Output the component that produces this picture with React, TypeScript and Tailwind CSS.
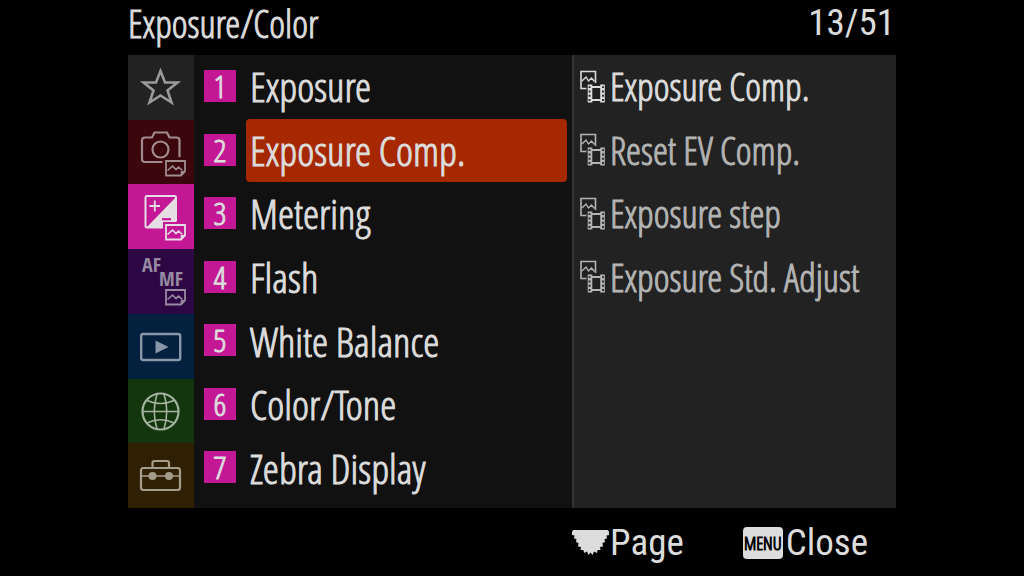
import { useState } from "react";
import type { ReactNode } from "react";

function PhotoOutline({ x, y }: { x: number; y: number }) {
  return (
    <g transform={`translate(${x} ${y})`} fill="none" stroke="currentColor">
      <path d="M1 1H20V11.5L16 15.500H1Z" strokeWidth="1.8" />
      <path d="M20 11.500H16V15.500Z" fill="currentColor" strokeWidth="0.8" />
      <path d="M2.500 10.500L7.500 6L11 9.500L13.500 7L17.500 10.500" strokeWidth="1.6" />
    </g>
  );
}

function StarIcon() {
  return (
    <svg viewBox="0 0 65 64" className="h-16 w-[65px]" fill="none" stroke="currentColor" strokeWidth="2.6" aria-hidden="true">
      <path d="M32.500 16L37 27.500H49.500L39.500 35.500L43.500 47.500L32.500 40.500L21.500 47.500L25.500 35.500L15.500 27.500H28Z" />
    </svg>
  );
}

function CameraIcon() {
  return (
    <svg viewBox="0 0 65 64" className="h-16 w-[65px]" fill="none" stroke="currentColor" strokeWidth="2.2" aria-hidden="true">
      <path d="M34.500 42H17Q14 42 14 39V20.500Q14 17.500 17 17.500H24L26.500 12.500H39L41.500 17.500H48.500Q51.500 17.500 51.500 20.500V37" />
      <circle cx="32.500" cy="29.500" r="8" />
      <PhotoOutline x={37} y={40} />
    </svg>
  );
}

function ExposureIcon() {
  return (
    <svg viewBox="0 0 65 64" className="h-16 w-[65px]" fill="none" stroke="currentColor" strokeWidth="2" aria-hidden="true">
      <path d="M35 42.500H19Q17.500 42.500 17.500 41V12.500Q17.500 11 19 11H46.500Q48 11 48 12.500V36.500" />
      <path d="M48 12V37H35V43H18Z" fill="currentColor" stroke="none" />
      <path d="M21.500 21H32M26.800 15.500V26.500" strokeWidth="1.8" />
      <path d="M34 34.200H43" stroke="#c41796" strokeWidth="2.2" />
      <PhotoOutline x={37} y={39} />
    </svg>
  );
}

function FocusIcon() {
  return (
    <svg viewBox="0 0 65 64" className="h-16 w-[65px]" aria-hidden="true">
      <text x="14" y="23" fill="currentColor" className="font-['Open_Sans_Condensed','Noto_Sans',sans-serif] text-[20px] font-bold">AF</text>
      <text x="31" y="37" fill="currentColor" className="font-['Open_Sans_Condensed','Noto_Sans',sans-serif] text-[20px] font-bold">MF</text>
      <PhotoOutline x={37} y={40} />
    </svg>
  );
}

function PlaybackIcon() {
  return (
    <svg viewBox="0 0 65 64" className="h-16 w-[65px]" fill="none" stroke="currentColor" strokeWidth="2.4" aria-hidden="true">
      <rect x="13.200" y="20" width="39" height="26" rx="2" />
      <path d="M27.500 26.500V39.500L40.500 33Z" fill="currentColor" stroke="none" />
    </svg>
  );
}

function NetworkIcon() {
  return (
    <svg viewBox="0 0 65 64" className="h-16 w-[65px]" fill="none" stroke="currentColor" strokeWidth="1.6" aria-hidden="true">
      <circle cx="32.500" cy="32.500" r="18" strokeWidth="2.200" />
      <path d="M14.500 32.500H50.500M19 21.500Q32.500 27.500 46 21.500M19 44Q32.500 37.500 46 44" />
      <path d="M29 15Q23.500 32.500 29 50M36 15Q41.500 32.500 36 50" />
    </svg>
  );
}

function ToolboxIcon() {
  return (
    <svg viewBox="0 0 65 64" className="h-16 w-[65px]" fill="none" stroke="currentColor" strokeWidth="2.200" aria-hidden="true">
      <rect x="13" y="24" width="39" height="22" rx="2.500" />
      <path d="M24.500 24V19Q24.500 17 26.500 17H39Q41 17 41 19V24" />
      <path d="M13 32H52" strokeWidth="1.600" />
      <circle cx="24.500" cy="32" r="4" fill="currentColor" stroke="none" />
      <circle cx="41" cy="32" r="4" fill="currentColor" stroke="none" />
    </svg>
  );
}

function StillMovieIcon() {
  return (
    <svg viewBox="0 0 26 34" className="h-[34px] w-[26px] shrink-0" fill="none" stroke="currentColor" aria-hidden="true">
      <path d="M6.500 18.500H1V1.500H15.500V13" strokeWidth="1.600" />
      <path d="M2 11L6 7L8.500 11L11.500 8L14.500 11.500" strokeWidth="1.400" />
      <path d="M11 17H22M11 30H22" strokeWidth="1.800" />
      <path d="M10 14.500V32.500M22.500 14.500V32.500" strokeWidth="4.600" />
      <path d="M9.500 16.200V31.500M23 16.200V31.500" stroke="#222222" strokeWidth="1.800" strokeDasharray="1.900 2.400" />
    </svg>
  );
}

function DialIcon() {
  return (
    <svg viewBox="0 0 38 26" className="h-[26px] w-[38px] shrink-0" fill="currentColor" aria-hidden="true">
      <path d="M1.500 0H35.500L37 1.500V5L34.500 5.500L35 8.500L32.500 9L33 12L30.500 13L31 16.500L28 17L28.500 20L25.500 20L25 23L22 21.500L20.500 25L18.500 22.500L16.500 25L15 21.500L12 23L11.500 20L8.500 20L9 17L6 16.500L6.500 13L4 12L4.500 9L2 8.500L2.500 5.500L0 5V1.500Z" />
    </svg>
  );
}

interface Tab {
  name: string;
  tint: string;
  icon: ReactNode;
}

const tabs: Tab[] = [
  { name: "My Menu", tint: "bg-[#222222] text-[#9a9a9a]", icon: <StarIcon /> },
  { name: "Shooting", tint: "bg-[#3b060c] text-[#a08c8f]", icon: <CameraIcon /> },
  { name: "Exposure/Color", tint: "bg-[#c41796] text-[#e6dce4]", icon: <ExposureIcon /> },
  { name: "Focus", tint: "bg-[#2c0743] text-[#978aa2]", icon: <FocusIcon /> },
  { name: "Playback", tint: "bg-[#04203f] text-[#8797a8]", icon: <PlaybackIcon /> },
  { name: "Network", tint: "bg-[#14360e] text-[#a3b3a0]", icon: <NetworkIcon /> },
  { name: "Setup", tint: "bg-[#302003] text-[#a59d8c]", icon: <ToolboxIcon /> },
];

const groups = ["Exposure", "Exposure Comp.", "Metering", "Flash", "White Balance", "Color/Tone", "Zebra Display"];
const settings = ["Exposure Comp.", "Reset EV Comp.", "Exposure step", "Exposure Std. Adjust"];

export default function App() {
  const [tab, setTab] = useState(2);
  const [group, setGroup] = useState(1);

  return (
    <div className="flex min-h-screen flex-col bg-black px-[12.5%] font-['Open_Sans_Condensed_Light','Roboto_Condensed',sans-serif] text-[#dcdcdc] [-webkit-text-stroke:1px]">
      <header className="flex h-[55px] items-start justify-between leading-[46px]">
        <h1 className="text-[38px]">Exposure/Color</h1>
        <p className="pr-px font-['Roboto_Condensed',sans-serif] text-[37px] [-webkit-text-stroke:0]">13/51</p>
      </header>

      <main className="flex min-h-[453px] bg-[#111111]">
        <nav aria-label="Menu tabs" className="grid w-[66px] shrink-0 grid-rows-7">
          {tabs.map((t, i) => (
            <button
              key={t.name}
              type="button"
              aria-label={t.name}
              aria-pressed={i === tab}
              onClick={() => setTab(i)}
              className={`flex items-center [-webkit-text-stroke:0] ${t.tint}`}
            >
              {t.icon}
            </button>
          ))}
        </nav>

        <ol className="grid min-w-0 flex-1 grid-rows-7 pr-[5px] pb-2 pl-[10px]">
          {groups.map((g, i) => (
            <li key={g} className="flex gap-[10px]">
              <span className="mt-[15px] flex size-8 shrink-0 items-center justify-center bg-[#c41796] text-[32px] leading-none">
                {i + 1}
              </span>
              <button
                type="button"
                aria-pressed={i === group}
                onClick={() => setGroup(i)}
                className={`flex-1 rounded-[4px] px-1 text-left text-[41px] leading-[63px] whitespace-nowrap ${i === group ? "bg-[#a62800]" : ""}`}
              >
                {g}
              </button>
            </li>
          ))}
        </ol>

        <ul className="grid w-[42.2%] grid-rows-7 border-l-2 border-[#333333] bg-[#222222] pb-2 pl-[6px]">
          {settings.map((s, i) => (
            <li key={s}>
              <button
                type="button"
                className={`flex h-full w-full items-center gap-1 text-left text-[38px] leading-[63px] whitespace-nowrap ${i === 0 ? "" : "text-[#b4b4b4]"}`}
              >
                <StillMovieIcon />
                {s}
              </button>
            </li>
          ))}
        </ul>
      </main>

      <footer className="flex h-[68px] items-center justify-end gap-[59px] pt-[2px] pr-7 font-['Roboto_Condensed',sans-serif] text-[37px] [-webkit-text-stroke:0]">
        <button type="button" className="flex items-center">
          <DialIcon />
          Page
        </button>
        <button type="button" className="flex items-center gap-[3px]">
          <span className="flex h-8 w-10 items-center justify-center rounded-[4px] bg-[#dcdcdc] font-['Open_Sans_Condensed_Light',sans-serif] text-[18px] text-black [-webkit-text-stroke:1px]">MENU</span>
          Close
        </button>
      </footer>
    </div>
  );
}
